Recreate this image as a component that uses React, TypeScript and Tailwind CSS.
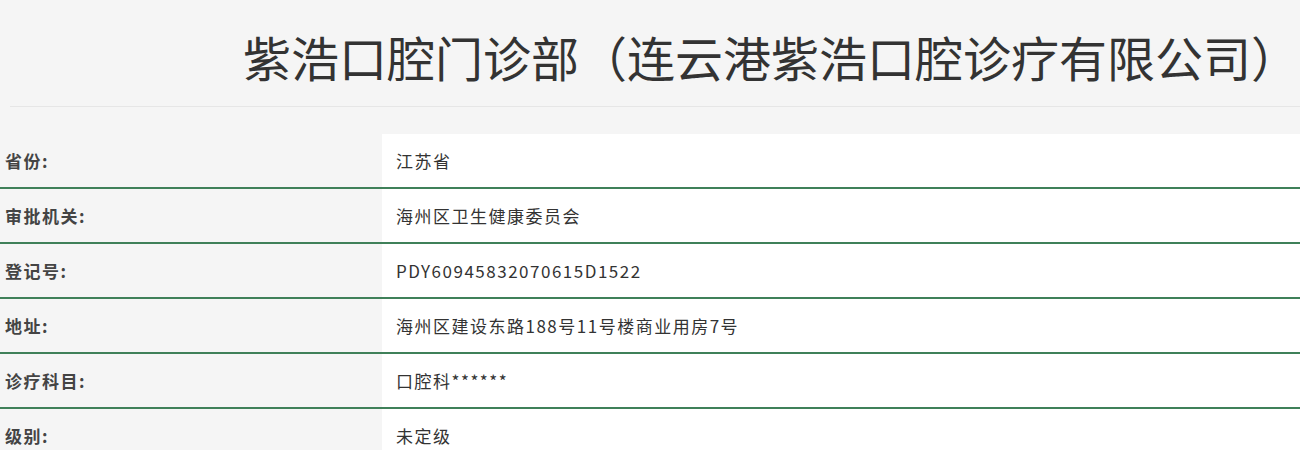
import React from "react";

const rows: [string, string][] = [
  ["省份:", "江苏省"],
  ["审批机关:", "海州区卫生健康委员会"],
  ["登记号:", "PDY60945832070615D1522"],
  ["地址:", "海州区建设东路188号11号楼商业用房7号"],
  ["诊疗科目:", "口腔科******"],
  ["级别:", "未定级"],
];

export default function App() {
  return (
    <div
      className="w-[1300px] h-[450px] overflow-hidden bg-[#f5f5f5]"
      style={{ fontFamily: '"Microsoft YaHei", "Noto Sans CJK SC", "Noto Sans", sans-serif' }}
    >
      <div className="ml-[10px] h-[107px] border-b border-[#e6e6e6] flex items-center justify-end pr-[1px]">
        <h1 className="text-[48px] leading-none text-[#333] font-normal pt-[6px]">
          紫浩口腔门诊部（连云港紫浩口腔诊疗有限公司）
        </h1>
      </div>
      <div className="mt-[27px]">
        {rows.map(([k, v]) => (
          <div key={k} className="flex h-[55px] border-b-2 border-[#3f8059]">
            <div className="w-[382px] flex items-center pl-[5px] text-[17px] tracking-[1.5px] font-bold text-[#444]">
              {k}
            </div>
            <div className="flex-1 bg-white flex items-center pl-[14px] text-[17px] tracking-[1.5px] text-[#333]">
              {v}
            </div>
          </div>
        ))}
      </div>
    </div>
  );
}
